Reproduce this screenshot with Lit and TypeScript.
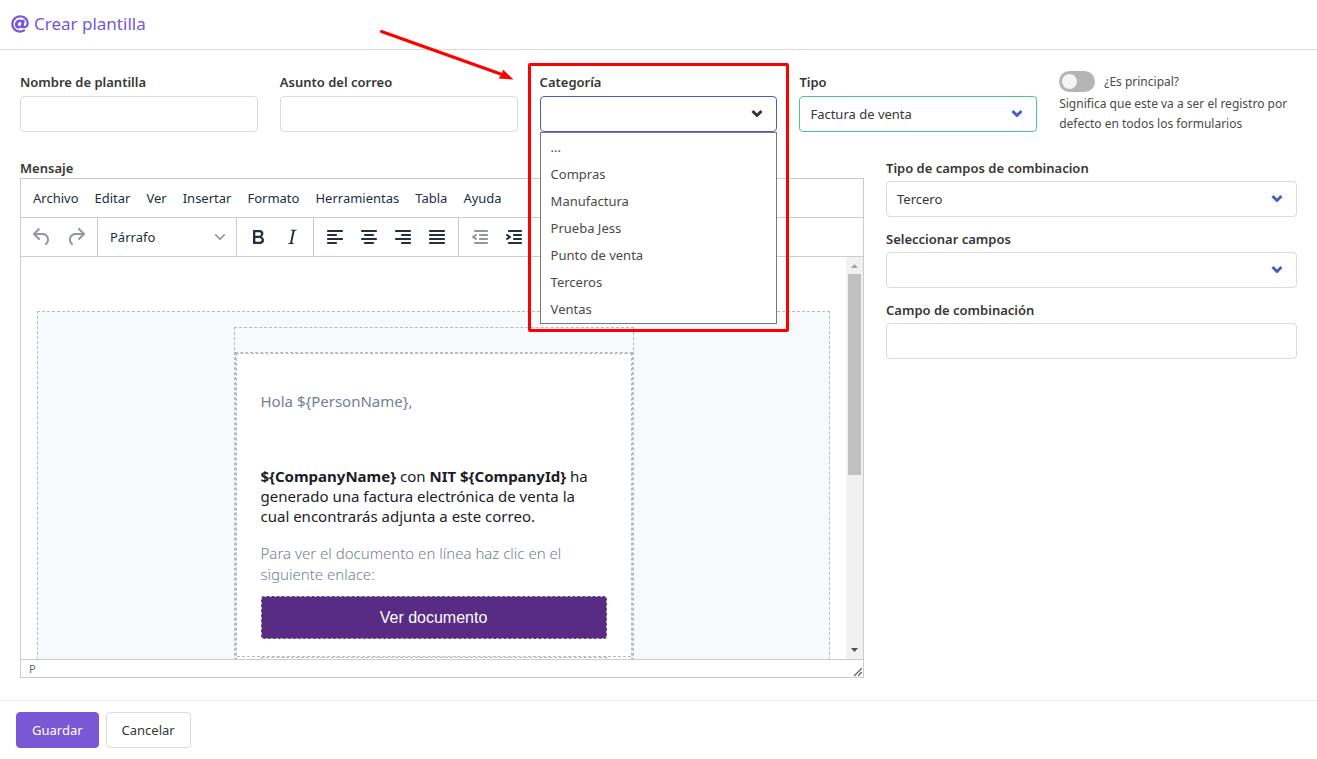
import { LitElement, html, svg, css } from "lit";
import { customElement, state } from "lit/decorators.js";
import { classMap } from "lit/directives/class-map.js";

const MENUS = ["Archivo", "Editar", "Ver", "Insertar", "Formato", "Herramientas", "Tabla", "Ayuda"];
const CATEGORIES = ["...", "Compras", "Manufactura", "Prueba Jess", "Punto de venta", "Terceros", "Ventas"];

const bars = (rows: number[][]) =>
  rows.map(([x, w], i) => svg`<rect x=${x} y=${5 + i * 4} width=${w} height="2" rx="0.8"></rect>`);

const ICONS: Record<string, unknown> = {
  undo: svg`<path d="M6.4 8H12c3.7 0 6.2 2 6.8 5.1.6 2.7-.4 5.6-2.3 6.8a1 1 0 01-1-1.8c1.1-.6 1.8-2.7 1.4-4.6-.5-2.1-2.1-3.5-4.9-3.5H6.4l3.3 3.3a1 1 0 11-1.4 1.4l-5-5a1 1 0 010-1.4l5-5a1 1 0 011.4 1.4L6.4 8z"></path>`,
  redo: svg`<path d="M17.6 10H12c-2.8 0-4.4 1.4-4.9 3.5-.4 2 .3 4 1.4 4.6a1 1 0 11-1 1.8c-2-1.2-2.9-4.1-2.3-6.8.6-3 3-5.1 6.8-5.1h5.6l-3.3-3.3a1 1 0 111.4-1.4l5 5a1 1 0 010 1.4l-5 5a1 1 0 01-1.4-1.4l3.3-3.3z"></path>`,
  bold: svg`<path d="M7.8 19c-.3 0-.5 0-.6-.2l-.2-.5V5.7c0-.2 0-.4.2-.5l.6-.2h5c1.5 0 2.7.3 3.5 1 .7.6 1.1 1.4 1.1 2.5a3 3 0 01-.6 1.9c-.4.6-1 1-1.6 1.2.4.1.9.3 1.3.6s.8.7 1 1.2c.4.4.5 1 .5 1.6 0 1.3-.4 2.3-1.3 3-.8.7-2.1 1-3.8 1H7.8zm5-8.3c.6 0 1.2-.1 1.6-.5.4-.3.6-.7.6-1.3 0-1.1-.8-1.7-2.3-1.7H9.3v3.5h3.4zm.5 6c.7 0 1.3-.1 1.7-.4.4-.4.6-.9.6-1.5s-.2-1-.7-1.4c-.4-.3-1-.4-2-.4H9.4v3.8h4z"></path>`,
  italic: svg`<path d="M16.7 4.7l-.1.9h-.3c-.6 0-1 0-1.4.3-.3.3-.4.6-.5 1.1l-2.1 9.8v.6c0 .5.4.8 1.4.8h.2l-.2.8H8l.2-.8h.2c1.1 0 1.8-.5 2-1.5l2-9.8.1-.5c0-.6-.4-.8-1.4-.8h-.3l.2-.9h5.8z"></path>`,
  left: bars([[4, 16], [4, 10], [4, 16], [4, 10]]),
  center: bars([[4, 16], [7, 10], [4, 16], [7, 10]]),
  right: bars([[4, 16], [10, 10], [4, 16], [10, 10]]),
  justify: bars([[4, 16], [4, 16], [4, 16], [4, 16]]),
  outdent: svg`${bars([[6, 14], [11, 9], [11, 9], [6, 14]])}<path d="M8.6 13.2a1 1 0 01-1.2 1.6l-3-2a1 1 0 010-1.6l3-2a1 1 0 011.2 1.6L6.8 12l1.8 1.2z"></path>`,
  indent: svg`${bars([[6, 14], [11, 9], [11, 9], [6, 14]])}<path d="M4.4 13.2L6.2 12l-1.8-1.2a1 1 0 011.2-1.6l3 2a1 1 0 010 1.6l-3 2a1 1 0 11-1.2-1.6z"></path>`,
};

@customElement("app-root")
export class AppRoot extends LitElement {
  @state() private main = false;

  static styles = css`
    :host {
      display: block;
      font-family: "Noto Sans", "Open Sans", sans-serif;
      font-size: 13px;
      line-height: 20px;
      color: #4a4a4a;
      background: #fff;
    }
    * { box-sizing: border-box; }
    button, input, select { font: inherit; color: #363636; margin: 0; }
    .page { display: flex; flex-direction: column; min-height: 100vh; }
    .head {
      display: flex; align-items: center; gap: 5px;
      padding: 12px 11px 13px; border-bottom: 1px solid #dbdbdb; color: #7957d5;
    }
    .head h1 { margin: 0; font-size: 17px; line-height: 24px; font-weight: 400; }
    .at { width: 18px; height: 18px; fill: currentColor; display: block; }
    .body {
      flex: 1; padding: 22px 20px;
      display: flex; flex-direction: column; gap: 24px;
    }
    .fields { display: grid; grid-template-columns: repeat(5, minmax(0, 1fr)); gap: 22px; }
    .work {
      flex: 1; display: grid; column-gap: 22px;
      grid-template-columns: repeat(12, minmax(0, 1fr));
    }
    .field { display: flex; flex-direction: column; gap: 4px; position: relative; }
    .label { font-weight: 600; color: #363636; }
    .input {
      width: 100%; height: 36px; padding: 0 10px; display: block;
      border: 1px solid #dbdbdb; border-radius: 4px; background: #fff; outline: none;
      appearance: none;
    }
    .select { position: relative; }
    .select .input { padding-right: 36px; }
    .arrow {
      position: absolute; right: 13px; top: 12px; width: 14px; height: 12px;
      fill: none; stroke: #485fc7; stroke-width: 3; pointer-events: none;
      stroke-linecap: butt; stroke-linejoin: round;
    }
    .green .input { border-color: #48c78e; }
    .active .input { border-color: #485fc7; }
    .active .arrow { stroke: #363636; }
    .menu {
      position: absolute; top: 100%; left: 0; right: 0; z-index: 2;
      margin: 0; padding: 1px 0 0; list-style: none;
      border: 1px solid #767676; background: #fff;
    }
    .menu li { padding: 0 10px; line-height: 27px; cursor: default; }
    .mark {
      position: absolute; z-index: 3; left: -12px; right: -12px; top: -9px; height: 269px;
      border: 3px solid #f00; border-radius: 2px; pointer-events: none;
    }
    .pointer {
      position: absolute; z-index: 3; left: -162px; top: -44px;
      width: 138px; height: 56px; pointer-events: none;
    }
    .switch { display: flex; align-items: center; gap: 9px; height: 21px; }
    .toggle {
      appearance: none; width: 36px; height: 21px; border-radius: 11px; padding: 3px;
      background: #b5b5b5; display: flex;
    }
    .toggle::before { content: ""; width: 15px; height: 15px; border-radius: 50%; background: #f5f5f5; }
    .toggle:checked { background: #7957d5; justify-content: flex-end; }
    .small { font-size: 12px; }
    .help { margin: 0; }
    .principal { display: flex; flex-direction: column; gap: 2px; margin-top: -1px; }

    .message { grid-column: span 8; display: flex; flex-direction: column; }
    .side { grid-column: span 4; display: flex; flex-direction: column; gap: 12px; }
    .side .field { gap: 3px; }

    .editor {
      flex: 1; display: flex; flex-direction: column;
      border: 1px solid #ccc; color: #222f3e; background: #fff;
    }
    .editor button, .editor select { color: #222f3e; background: none; border: 0; }
    .bar { display: flex; height: 39px; border-bottom: 1px solid #ccc; }
    .menus { align-items: center; padding: 0 8px; gap: 8px; }
    .menus button { padding: 0 4px; line-height: 28px; }
    .group { display: flex; align-items: center; padding: 0 4px; border-right: 1px solid #ccc; }
    .group:last-child { border-right: 0; }
    .group button { width: 34px; height: 34px; padding: 5px; }
    .group svg { width: 24px; height: 24px; display: block; fill: #222f3e; }
    .group .off svg { fill: #90979f; }
    .format { position: relative; }
    .format select { appearance: none; width: 130px; height: 34px; padding: 0 8px; outline: none; }
    .group .format svg {
      position: absolute; right: 7px; top: 12px; width: 10px; height: 10px;
      fill: #90979f; pointer-events: none;
    }
    .pane { flex: 1 1 402px; height: 402px; display: flex; overflow: hidden; }
    .doc { flex: 1; min-width: 0; overflow: hidden; padding: 54px 16px 0; }
    .canvas { border: 1px dashed #bbb; background: #f6fafd; padding-top: 15px; height: 600px; }
    .sheet { width: 400px; margin: 0 auto; border: 1px dashed #bbb; padding-top: 24px; height: 580px; }
    .card { border: 1px dashed #bbb; background: #fff; height: 100%; }
    .column { border: 1px dashed #bbb; height: 100%; color: #1b1b28; font-size: 15px; }
    .cell { padding: 37px 24px 17px; border-bottom: 1px dashed #bbb; }
    .cell p { margin: 0 0 17px; }
    .cell .hello { color: #718096; margin-bottom: 55px; }
    .cell .note { color: #718096; font-weight: 300; line-height: 21px; margin-bottom: 11px; }
    .see {
      display: block; border: 1px dashed #bbb; border-radius: 3px; background: #582b85;
      color: #fff; text-align: center; text-decoration: none;
      font-family: "Liberation Sans", Arial, sans-serif; font-size: 16px; line-height: 41px;
    }
    .next { margin: 0 24px; border: 1px dashed #bbb; height: 40px; }
    .scroll {
      width: 17px; background: #f1f1f1; display: flex; flex-direction: column;
      align-items: center; justify-content: space-between;
    }
    .scroll svg { width: 17px; height: 17px; display: block; fill: #a3a3a3; }
    .scroll .down { fill: #505050; }
    .thumb { width: 13px; height: 201px; background: #c1c1c1; margin-bottom: auto; }
    .status {
      display: flex; justify-content: space-between; align-items: flex-end; height: 18px;
      border-top: 1px solid #ccc; padding: 0 0 0 8px; color: #626b76;
      font-size: 11px; line-height: 17px;
    }
    .status svg { width: 10px; height: 10px; fill: #626b76; display: block; }

    .foot { display: flex; gap: 7px; padding: 11px 16px; border-top: 1px solid #ededed; }
    .button {
      height: 36px; padding: 0 15px; border: 1px solid #dbdbdb; border-radius: 4px;
      background: #fff;
    }
    .primary { background: #7957d5; border-color: #7957d5; color: #fff; }
  `;

  private tool(icon: string, name: string, off = false) {
    return html`<button type="button" aria-label=${name} class=${classMap({ off })}>
      <svg viewBox="0 0 24 24">${ICONS[icon]}</svg>
    </button>`;
  }

  private arrow() {
    return html`<svg class="arrow" viewBox="0 0 14 12"><path d="M2.500 3l4.500 4.500l4.500 -4.500"></path></svg>`;
  }

  private select(id: string, label: string, value: string, tone = "") {
    return html`<div class="field">
      <label class="label" for=${id}>${label}</label>
      <div class="select ${tone}">
        <select class="input" id=${id}><option>${value}</option></select>
        ${this.arrow()}
      </div>
    </div>`;
  }

  private text(id: string, label: string) {
    return html`<div class="field">
      <label class="label" for=${id}>${label}</label>
      <input class="input" type="text" id=${id} />
    </div>`;
  }

  private category() {
    return html`<div class="field">
      <label class="label" for="category">Categoría</label>
      <div class="select active">
        <select class="input" id="category"><option></option></select>
        ${this.arrow()}
        <ul class="menu" role="listbox" aria-label="Categoría">
          ${CATEGORIES.map((c) => html`<li role="option">${c}</li>`)}
        </ul>
      </div>
      <div class="mark"></div>
      <svg class="pointer" viewBox="0 0 138 56">
        <path d="M3.500 3.500L124 46.500" fill="none" stroke="#f00" stroke-width="3" stroke-linecap="round"></path>
        <path d="M135.500 51.500L120.500 50.500L124 46L125 41.500Z" fill="#f00"></path>
      </svg>
    </div>`;
  }

  private editor() {
    return html`<div class="editor">
      <div class="bar menus">${MENUS.map((m) => html`<button type="button">${m}</button>`)}</div>
      <div class="bar">
        <div class="group">${this.tool("undo", "Deshacer", true)}${this.tool("redo", "Rehacer", true)}</div>
        <div class="group">
          <div class="format">
            <select aria-label="Formato de bloque"><option>Párrafo</option></select>
            <svg viewBox="0 0 10 10"><path d="M8.700 2.200c.3-.3.800-.3 1 0 .4.4.4.9 0 1.200L5.700 7.800c-.3.3-.9.3-1.200 0L.2 3.400a.8.800 0 010-1.200c.3-.3.8-.3 1.100 0L5 6l3.700-3.800z"></path></svg>
          </div>
        </div>
        <div class="group">${this.tool("bold", "Negrita")}${this.tool("italic", "Cursiva")}</div>
        <div class="group">
          ${this.tool("left", "Alinear a la izquierda")}${this.tool("center", "Centrar")}
          ${this.tool("right", "Alinear a la derecha")}${this.tool("justify", "Justificar")}
        </div>
        <div class="group">${this.tool("outdent", "Reducir sangría", true)}${this.tool("indent", "Aumentar sangría")}</div>
      </div>
      <div class="pane">
        <div class="doc">
          <div class="canvas">
            <div class="sheet">
              <div class="card">
                <div class="column">
                  <div class="cell">
                    <p class="hello">Hola \${PersonName},</p>
                    <p><b>\${CompanyName}</b> con <b>NIT \${CompanyId}</b> ha generado una factura electrónica de venta la cual encontrarás adjunta a este correo.</p>
                    <p class="note">Para ver el documento en línea haz clic en el siguiente enlace:</p>
                    <a class="see" href="#documento">Ver documento</a>
                  </div>
                  <div class="next"></div>
                </div>
              </div>
            </div>
          </div>
        </div>
        <div class="scroll">
          <svg viewBox="0 0 17 17"><path d="M5 11h7l-3.500-4z"></path></svg>
          <div class="thumb"></div>
          <svg class="down" viewBox="0 0 17 17"><path d="M5 6h7l-3.500 4z"></path></svg>
        </div>
      </div>
      <div class="status">
        <span>P</span>
        <svg viewBox="0 0 10 10"><path d="M8.100 1.100A.5.5 0 119 2l-7 7A.5.5 0 111 8l7-7zM8.100 5.100A.5.5 0 119 6l-3 3A.5.5 0 115 8l3-3z"></path></svg>
      </div>
    </div>`;
  }

  render() {
    return html`<div class="page">
      <header class="head">
        <svg class="at" viewBox="0 0 512 512"><path d="M256 8C118.941 8 8 118.919 8 256c0 137.059 110.919 248 248 248 48.154 0 95.342-14.140 135.408-40.223 12.005-7.815 14.625-24.288 5.552-35.372l-10.177-12.433c-7.671-9.371-21.179-11.667-31.373-5.129C325.920 429.757 291.314 440 256 440c-101.458 0-184-82.542-184-184S154.542 72 256 72c100.139 0 184 57.619 184 160 0 38.786-21.093 79.742-58.170 83.693-17.349-.454-16.910-12.857-13.476-30.024l23.433-121.110C394.653 149.750 383.308 136 368.225 136h-44.981a13.518 13.518 0 0 0-13.432 11.993l-.010.092c-14.697-17.901-40.448-21.775-59.971-21.775-74.580 0-137.831 62.234-137.831 151.460 0 65.303 36.785 105.870 96 105.870 26.984 0 57.369-15.637 74.991-38.333 9.522 34.104 40.613 34.103 70.710 34.103C462.609 379.410 504 307.798 504 232 504 95.653 394.023 8 256 8zm-21.680 304.430c-22.249 0-36.070-15.623-36.070-40.771 0-44.993 30.779-72.729 58.630-72.729 22.292 0 35.601 15.241 35.601 40.770 0 45.061-33.875 72.730-58.161 72.730z"></path></svg>
        <h1>Crear plantilla</h1>
      </header>
      <main class="body">
        <div class="fields">
          ${this.text("name", "Nombre de plantilla")}
          ${this.text("subject", "Asunto del correo")}
          ${this.category()}
          ${this.select("type", "Tipo", "Factura de venta", "green")}
          <div class="principal">
            <div class="switch">
              <input class="toggle" type="checkbox" id="main" .checked=${this.main}
                @change=${(e: Event) => (this.main = (e.target as HTMLInputElement).checked)} />
              <label class="small" for="main">¿Es principal?</label>
            </div>
            <p class="help small">Significa que este va a ser el registro por defecto en todos los formularios</p>
          </div>
        </div>
        <div class="work">
          <section class="message">
            <div class="label">Mensaje</div>
            ${this.editor()}
          </section>
          <section class="side">
            ${this.select("kind", "Tipo de campos de combinacion", "Tercero")}
            ${this.select("pick", "Seleccionar campos", "")}
            ${this.text("merge", "Campo de combinación")}
          </section>
        </div>
      </main>
      <footer class="foot">
        <button class="button primary" type="button">Guardar</button>
        <button class="button" type="button">Cancelar</button>
      </footer>
    </div>`;
  }
}
